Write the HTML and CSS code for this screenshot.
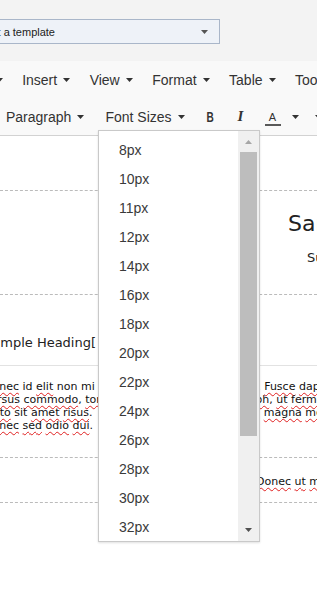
FILE: index.html
```html
<!DOCTYPE html>
<html>
<head>
<meta charset="utf-8">
<link rel="stylesheet" href="styles.css">
</head>
<body>
<div class="page">
  <div class="top">
    <div class="select">
      <span class="select-text">Select a template</span>
      <svg class="select-arrow" width="7" height="4" viewBox="0 0 7 4"><polygon points="0,0 7,0 3.5,4"/></svg>
    </div>
  </div>

  <div class="menubar">
    <div class="menu-item menu-first">Edit<svg class="caret" width="7" height="4" viewBox="0 0 7 4"><polygon points="0,0 7,0 3.5,4"/></svg></div>
    <div class="menu-item">Insert<svg class="caret" width="7" height="4" viewBox="0 0 7 4"><polygon points="0,0 7,0 3.5,4"/></svg></div>
    <div class="menu-item">View<svg class="caret" width="7" height="4" viewBox="0 0 7 4"><polygon points="0,0 7,0 3.5,4"/></svg></div>
    <div class="menu-item">Format<svg class="caret" width="7" height="4" viewBox="0 0 7 4"><polygon points="0,0 7,0 3.5,4"/></svg></div>
    <div class="menu-item">Table<svg class="caret" width="7" height="4" viewBox="0 0 7 4"><polygon points="0,0 7,0 3.5,4"/></svg></div>
    <div class="menu-item">Tools<svg class="caret" width="7" height="4" viewBox="0 0 7 4"><polygon points="0,0 7,0 3.5,4"/></svg></div>
  </div>

  <div class="toolbar">
    <div class="tb-list tb-para">Paragraph<svg class="caret" width="7" height="4" viewBox="0 0 7 4"><polygon points="0,0 7,0 3.5,4"/></svg></div>
    <div class="tb-list tb-size">Font Sizes<svg class="caret" width="7" height="4" viewBox="0 0 7 4"><polygon points="0,0 7,0 3.5,4"/></svg></div>
    <span class="ico ico-b"><span class="b-glyph">B</span></span>
    <span class="ico ico-i">I</span>
    <span class="ico ico-a"><span class="a-glyph">A</span><span class="a-bar"></span></span>
    <svg class="caret tb-caret" width="7" height="4" viewBox="0 0 7 4"><polygon points="0,0 7,0 3.5,4"/></svg>
    <svg class="caret tb-caret2" width="7" height="4" viewBox="0 0 7 4"><polygon points="0,0 7,0 3.5,4"/></svg>
  </div>

  <div class="content">
    <div class="sec sec1"></div>
    <div class="sec sec2">
      <div class="heading-big">Sample Heading</div>
      <div class="heading-sub">Sub heading text</div>
    </div>
    <div class="sec sec3">
      <div class="heading-left">Sample Heading[</div>
    </div>
    <div class="sec sec4">
      <div class="para">
        <span class="sp">Donec</span> id <span class="sp">elit</span> non mi<span class="ws1"> porta gravida at eget metus</span>. <span class="sp">Fusce</span> <span class="sp">dapibus</span>, tellus ac<br>
        <span class="sp">cursus</span> <span class="sp">commodo</span>, <span class="sp">tortor</span><span class="ws2"> mauris condimentum </span><span class="sp">nibh</span>, <span class="sp">ut</span> <span class="sp">fermentum</span> massa<br>
        <span class="sp">justo</span> sit <span class="sp">amet</span> <span class="sp">risus</span>.<span class="ws3"> Etiam porta sem malesuada </span><span class="sp">magna</span> <span class="sp">mollis</span> euismod.<br>
        <span class="sp">Donec</span> <span class="sp">sed</span> <span class="sp">odio</span> <span class="sp">dui</span>.
      </div>
    </div>
    <div class="sec sec5">
      <div class="para-right"><span class="sp">Donec</span> <span class="sp">ut</span> <span class="sp">mauris</span> eget massa</div>
    </div>
    <div class="sec sec6"></div>
  </div>

  <div class="dropdown">
    <div class="dd-list">
      <div class="dd-item">8px</div>
      <div class="dd-item">10px</div>
      <div class="dd-item">11px</div>
      <div class="dd-item">12px</div>
      <div class="dd-item">14px</div>
      <div class="dd-item">16px</div>
      <div class="dd-item">18px</div>
      <div class="dd-item">20px</div>
      <div class="dd-item">22px</div>
      <div class="dd-item">24px</div>
      <div class="dd-item">26px</div>
      <div class="dd-item">28px</div>
      <div class="dd-item">30px</div>
      <div class="dd-item">32px</div>
      <div class="dd-item">34px</div>
      <div class="dd-item">36px</div>
    </div>
    <div class="sb">
      <svg class="sb-up" width="7" height="4" viewBox="0 0 7 4"><polygon points="0,4 7,4 3.5,0"/></svg>
      <div class="sb-thumb"></div>
      <div class="sb-fill"></div>
      <svg class="sb-down" width="7" height="4" viewBox="0 0 7 4"><polygon points="0,0 7,0 3.5,4"/></svg>
    </div>
  </div>
</div>
</body>
</html>
```

FILE: styles.css
```css
html, body {
  margin: 0;
  padding: 0;
}
body {
  font-family: "Liberation Sans", Arial, sans-serif;
  color: #333;
  background: #fff;
}
.page {
  position: relative;
  width: 317px;
  height: 589px;
  overflow: hidden;
  background: #fff;
}

/* top template select */
.top {
  height: 61px;
  box-sizing: border-box;
  padding-top: 19px;
  background: #f3f3f3;
}
.select {
  display: flex;
  align-items: center;
  box-sizing: border-box;
  height: 25px;
  width: 260px;
  margin-left: -40px;
  padding-left: 9px;
  padding-right: 10px;
  border: 1px solid #a9b6c9;
  background: #eef2f8;
  color: #222;
  font-size: 11px;
}
.select-text {
  flex: 1;
  white-space: nowrap;
}
.select-arrow {
  fill: #555;
  margin-right: 1px;
}

/* menu bar */
.menubar {
  height: 37px;
  display: flex;
  align-items: center;
  gap: 19.5px;
  background: #f9f9f9;
  font-size: 14px;
  white-space: nowrap;
}
.menu-item {
  display: flex;
  align-items: center;
  flex: none;
}
.menu-first {
  margin-left: -34.5px;
}
.caret {
  flex: none;
  fill: #333;
  margin-left: 6px;
}

/* toolbar */
.toolbar {
  height: 37px;
  display: flex;
  align-items: center;
  background: #f9f9f9;
  border-bottom: 1px solid #d2d2d2;
  font-size: 14px;
  white-space: nowrap;
}
.tb-list {
  display: flex;
  align-items: center;
  flex: none;
}
.tb-para {
  margin-left: 6px;
}
.tb-size {
  margin-left: 21px;
}
.ico {
  flex: none;
  width: 16px;
  display: flex;
  justify-content: center;
  color: #333;
}
.ico-b {
  margin-left: 18px;
}
.b-glyph {
  font-weight: bold;
  font-size: 14px;
  display: inline-block;
  transform: scaleX(0.72);
}
.ico-i {
  margin-left: 14px;
  font-family: "Liberation Serif", "Times New Roman", serif;
  font-style: italic;
  font-weight: bold;
  font-size: 15px;
}
.ico-a {
  margin-left: 16px;
  flex-direction: column;
  align-items: center;
  padding-top: 4px;
}
.a-glyph {
  font-size: 11px;
  line-height: 12px;
}
.a-bar {
  display: block;
  width: 16px;
  height: 2px;
  margin-top: 1px;
  background: #595959;
}
.tb-caret {
  margin-left: 11px;
}
.tb-caret2 {
  margin-left: 16px;
}

/* content */
.content {
  font-family: "DejaVu Sans", Verdana, sans-serif;
  color: #222;
  white-space: nowrap;
}
.sec1 {
  height: 54px;
  border-bottom: 1px dashed #bbb;
}
.sec2 {
  height: 104px;
  box-sizing: border-box;
  padding-top: 20px;
  padding-left: 288px;
  border-bottom: 1px dashed #bbb;
}
.heading-big {
  font-size: 22px;
  line-height: 26px;
}
.heading-sub {
  font-size: 13px;
  line-height: 16px;
  margin-top: 13px;
  padding-left: 19px;
}
.sec3 {
  height: 71px;
  box-sizing: border-box;
  padding-top: 40px;
  border-bottom: 1px solid #e2e2e2;
}
.heading-left {
  font-size: 13px;
  line-height: 16px;
  margin-left: -16px;
}
.sec4 {
  height: 92px;
  box-sizing: border-box;
  padding-top: 14px;
  border-bottom: 1px dashed #bbb;
}
.para {
  font-size: 11px;
  line-height: 13px;
  margin-left: -16px;
  color: #111;
}
.ws1 {
  word-spacing: 0.75px;
}
.ws2 {
  word-spacing: 1.5px;
}
.ws3 {
  word-spacing: 1.8px;
}
.sp {
  text-decoration: underline wavy #e02020;
  text-decoration-thickness: 1px;
  text-underline-offset: 2px;
}
.sec5 {
  height: 45px;
  box-sizing: border-box;
  padding-top: 17px;
  border-bottom: 1px dashed #bbb;
}
.para-right {
  font-size: 11px;
  line-height: 13px;
  padding-left: 256px;
  color: #111;
}

/* font size dropdown */
.dropdown {
  position: absolute;
  left: 98px;
  top: 130px;
  width: 162px;
  height: 412px;
  box-sizing: border-box;
  border: 1px solid #c9c9c9;
  background: #fff;
  box-shadow: 0 1px 2px rgba(0, 0, 0, 0.12);
  display: flex;
  overflow: hidden;
  z-index: 5;
}
.dd-list {
  flex: 1;
  padding-top: 5px;
  overflow: hidden;
}
.dd-item {
  height: 29px;
  line-height: 29px;
  padding-left: 20px;
  font-size: 14px;
  color: #3a3a3a;
}
.sb {
  width: 21px;
  flex: none;
  background: #f0f0f0;
  display: flex;
  flex-direction: column;
  align-items: center;
}
.sb-up {
  fill: #a6a6a6;
  margin-top: 9px;
  flex: none;
}
.sb-thumb {
  flex: none;
  width: 17px;
  height: 284px;
  margin-top: 8px;
  background: #bdbdbd;
}
.sb-fill {
  flex: 1;
}
.sb-down {
  fill: #505050;
  margin-bottom: 9px;
  flex: none;
}
```
